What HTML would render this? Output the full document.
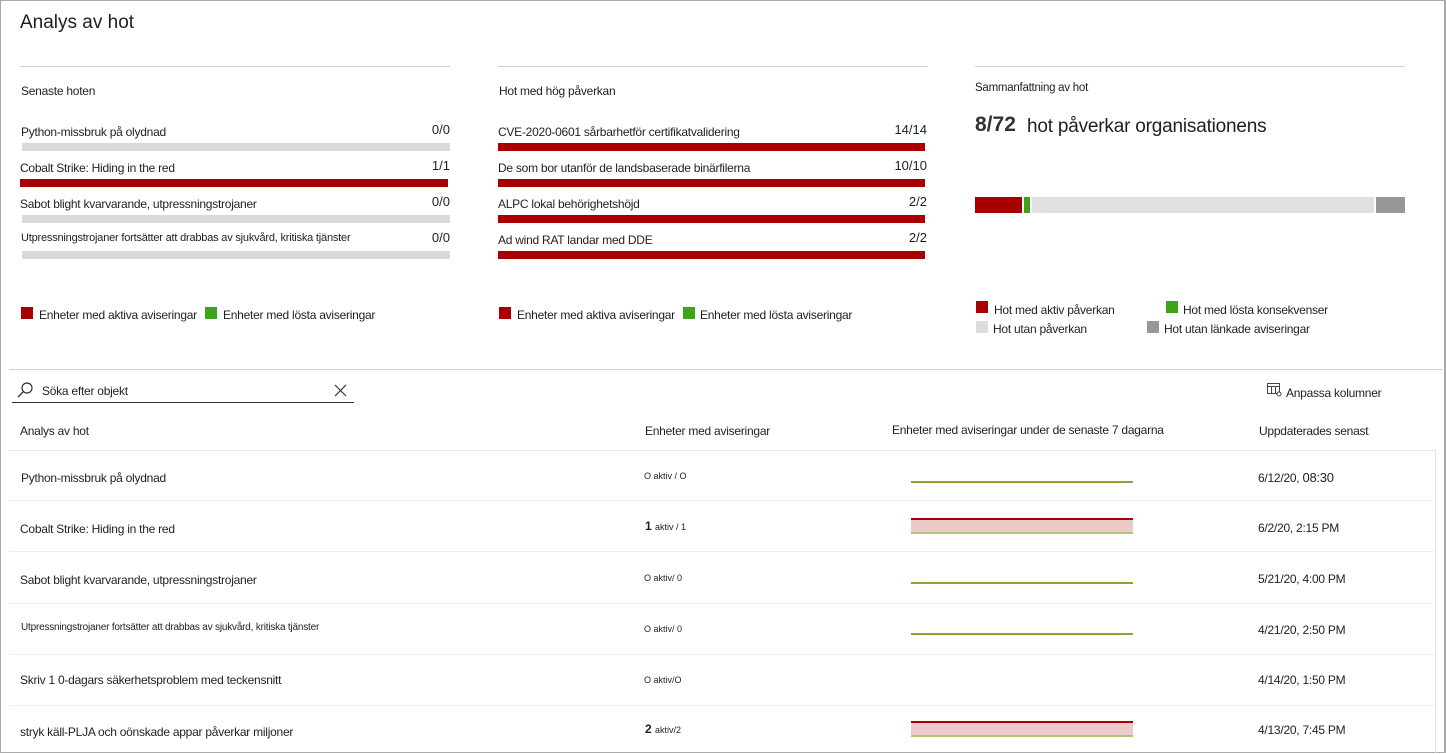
<!DOCTYPE html><html><head><meta charset="utf-8"><style>
body{margin:0;width:1446px;height:754px;overflow:hidden;background:#fff;font-family:"Liberation Sans",sans-serif;color:#201f1e;position:relative}
.a{position:absolute;white-space:nowrap}
.frame{position:absolute;left:0;top:0;width:1443px;height:751px;border:1px solid #a8a8a8;border-right:2px solid #a8a8a8}
.hr{position:absolute;height:1px;background:#d0d0d0}
.bar{position:absolute;height:8px;background:#d9d9d9}
.red{background:#a80000}
.t{font-size:12px;letter-spacing:-0.25px}
.n{font-size:13px;text-align:right}
.sq{position:absolute;width:12px;height:12px}
.s{font-size:11px;letter-spacing:-0.2px}
</style></head><body>
<div class="frame"></div>
<div class="a" style="left:20px;top:12px;font-size:19px">Analys av hot</div>
<div class="hr" style="left:20px;top:66px;width:430px"></div>
<div class="hr" style="left:498px;top:66px;width:430px"></div>
<div class="hr" style="left:975px;top:66px;width:430px"></div>

<div class="a t" style="left:21px;top:84px">Senaste hoten</div>
<div class="a t" style="left:21px;top:125px">Python-missbruk på olydnad</div><div class="a n" style="left:400px;width:50px;top:122px">0/0</div><div class="bar" style="left:22px;top:143px;width:428px"></div>
<div class="a t" style="left:20px;top:161px">Cobalt Strike: Hiding in the red</div><div class="a n" style="left:400px;width:50px;top:158px">1/1</div><div class="bar red" style="left:20px;top:179px;width:428px"></div>
<div class="a t" style="left:20px;top:197px">Sabot blight kvarvarande, utpressningstrojaner</div><div class="a n" style="left:400px;width:50px;top:194px">0/0</div><div class="bar" style="left:22px;top:215px;width:428px"></div>
<div class="a s" style="left:21px;top:232px">Utpressningstrojaner fortsätter att drabbas av sjukvård, kritiska tjänster</div><div class="a n" style="left:400px;width:50px;top:230px">0/0</div><div class="bar" style="left:22px;top:251px;width:428px"></div>
<div class="sq red" style="left:21px;top:307px"></div><div class="a t" style="left:39px;top:308px">Enheter med aktiva aviseringar</div>
<div class="sq" style="left:205px;top:307px;background:#3fa21b"></div><div class="a t" style="left:223px;top:308px">Enheter med lösta aviseringar</div>

<div class="a t" style="left:499px;top:84px">Hot med hög påverkan</div>
<div class="a t" style="left:498px;top:125px">CVE-2020-0601 sårbarhetför certifikatvalidering</div><div class="a n" style="left:860px;width:67px;top:122px">14/14</div><div class="bar red" style="left:498px;top:143px;width:427px"></div>
<div class="a t" style="left:498px;top:161px">De som bor utanför de landsbaserade binärfilerna</div><div class="a n" style="left:860px;width:67px;top:158px">10/10</div><div class="bar red" style="left:498px;top:179px;width:427px"></div>
<div class="a t" style="left:498px;top:197px">ALPC lokal behörighetshöjd</div><div class="a n" style="left:860px;width:67px;top:194px">2/2</div><div class="bar red" style="left:498px;top:215px;width:427px"></div>
<div class="a t" style="left:498px;top:233px">Ad wind RAT landar med DDE</div><div class="a n" style="left:860px;width:67px;top:230px">2/2</div><div class="bar red" style="left:498px;top:251px;width:427px"></div>
<div class="sq red" style="left:499px;top:307px"></div><div class="a t" style="left:517px;top:308px">Enheter med aktiva aviseringar</div>
<div class="sq" style="left:683px;top:307px;background:#3fa21b"></div><div class="a t" style="left:700px;top:308px">Enheter med lösta aviseringar</div>

<div class="a t" style="left:975px;top:82px;font-size:11.5px">Sammanfattning av hot</div>
<div class="a" style="left:975px;top:113px;font-size:21px;font-weight:bold;color:#333">8/72</div>
<div class="a" style="left:1027px;top:116px;font-size:19px;letter-spacing:-0.2px">hot påverkar organisationens</div>
<div style="position:absolute;left:975px;top:197px;width:47px;height:16px;background:#a80000"></div>
<div style="position:absolute;left:1024px;top:197px;width:6px;height:16px;background:#3fa21b"></div>
<div style="position:absolute;left:1032px;top:197px;width:342px;height:16px;background:#e1e1e1"></div>
<div style="position:absolute;left:1376px;top:197px;width:29px;height:16px;background:#979797"></div>
<div class="sq red" style="left:976px;top:301px"></div><div class="a t" style="left:994px;top:303px">Hot med aktiv påverkan</div>
<div class="sq" style="left:1166px;top:301px;background:#3fa21b"></div><div class="a t" style="left:1183px;top:303px">Hot med lösta konsekvenser</div>
<div class="sq" style="left:976px;top:321px;background:#ddd"></div><div class="a t" style="left:993px;top:322px">Hot utan påverkan</div>
<div class="sq" style="left:1147px;top:321px;background:#979797"></div><div class="a t" style="left:1164px;top:322px">Hot utan länkade aviseringar</div>

<div class="hr" style="left:9px;top:369px;width:1434px"></div>
<svg class="a" style="left:16px;top:382px" width="18" height="16" viewBox="0 0 18 16"><circle cx="11" cy="6" r="5" fill="none" stroke="#333" stroke-width="1.2"/><line x1="7.5" y1="9.5" x2="2" y2="15" stroke="#333" stroke-width="1.3"/></svg>
<div class="a t" style="left:42px;top:384px">Söka efter objekt</div>
<svg class="a" style="left:334px;top:384px" width="13" height="13"><path d="M1 1L12 12M12 1L1 12" stroke="#333" stroke-width="1.2"/></svg>
<div class="hr" style="left:12px;top:402px;width:342px;background:#333"></div>
<svg class="a" style="left:1267px;top:383px" width="16" height="14"><rect x="0.5" y="0.5" width="12" height="10" fill="none" stroke="#444"/><line x1="0" y1="3.5" x2="13" y2="3.5" stroke="#444"/><line x1="4.5" y1="3" x2="4.5" y2="11" stroke="#444"/><line x1="8.5" y1="3" x2="8.5" y2="11" stroke="#444"/><circle cx="12" cy="11" r="2" fill="#fff" stroke="#444"/></svg>
<div class="a t" style="left:1286px;top:386px">Anpassa kolumner</div>

<div class="a t" style="left:20px;top:424px">Analys av hot</div>
<div class="a t" style="left:645px;top:424px">Enheter med aviseringar</div>
<div class="a t" style="left:892px;top:423px">Enheter med aviseringar under de senaste 7 dagarna</div>
<div class="a t" style="left:1259px;top:424px">Uppdaterades senast</div>
<div class="hr" style="left:9px;top:450px;width:1427px;background:#e6e6e6"></div>
<div class="hr" style="left:1435px;top:450px;width:1px;height:303px;background:#e6e6e6"></div>

<div class="a t" style="left:21px;top:471px">Python-missbruk på olydnad</div><div class="a" style="left:644px;top:471px;font-size:9px">O aktiv / O</div>
<div style="position:absolute;left:911px;top:481px;width:222px;height:2px;background:#9b9b3a"></div><div class="a t" style="left:1258px;top:470px">6/12/20, <span style="font-size:13px">08:30</span></div>
<div class="hr" style="left:9px;top:500px;width:1427px;background:#eee"></div>

<div class="a t" style="left:20px;top:522px">Cobalt Strike: Hiding in the red</div><div class="a" style="left:645px;top:519px;font-size:12px"><b>1</b> <span style="font-size:9px">aktiv / 1</span></div>
<div style="position:absolute;left:911px;top:518px;width:222px;background:#eccaca;border-top:2px solid #a80000;border-bottom:2px solid #a8c878;box-sizing:border-box;height:16px"></div><div class="a t" style="left:1258px;top:521px">6/2/20, 2:15 PM</div>
<div class="hr" style="left:9px;top:551px;width:1427px;background:#eee"></div>

<div class="a t" style="left:20px;top:573px">Sabot blight kvarvarande, utpressningstrojaner</div><div class="a" style="left:644px;top:573px;font-size:9px">O aktiv/ 0</div>
<div style="position:absolute;left:911px;top:582px;width:222px;height:2px;background:#9b9b3a"></div><div class="a t" style="left:1258px;top:572px">5/21/20, 4:00 PM</div>
<div class="hr" style="left:9px;top:603px;width:1427px;background:#eee"></div>

<div class="a" style="left:21px;top:622px;font-size:10px;letter-spacing:-0.2px">Utpressningstrojaner fortsätter att drabbas av sjukvård, kritiska tjänster</div><div class="a" style="left:644px;top:624px;font-size:9px">O aktiv/ 0</div>
<div style="position:absolute;left:911px;top:633px;width:222px;height:2px;background:#9b9b3a"></div><div class="a t" style="left:1258px;top:623px">4/21/20, 2:50 PM</div>
<div class="hr" style="left:9px;top:654px;width:1427px;background:#eee"></div>

<div class="a t" style="left:20px;top:673px">Skriv 1 0-dagars säkerhetsproblem med teckensnitt</div><div class="a" style="left:644px;top:675px;font-size:9px">O aktiv/O</div>
<div class="a t" style="left:1258px;top:673px">4/14/20, 1:50 PM</div>
<div class="hr" style="left:9px;top:705px;width:1427px;background:#eee"></div>

<div class="a t" style="left:20px;top:725px">stryk käll-PLJA och oönskade appar påverkar miljoner</div><div class="a" style="left:645px;top:722px;font-size:12px"><b>2</b> <span style="font-size:9px">aktiv/2</span></div>
<div style="position:absolute;left:911px;top:721px;width:222px;height:16px;background:#eccaca;border-top:2px solid #a80000;border-bottom:2px solid #a8c878;box-sizing:border-box"></div><div class="a t" style="left:1258px;top:723px">4/13/20, 7:45 PM</div>
</body></html>
